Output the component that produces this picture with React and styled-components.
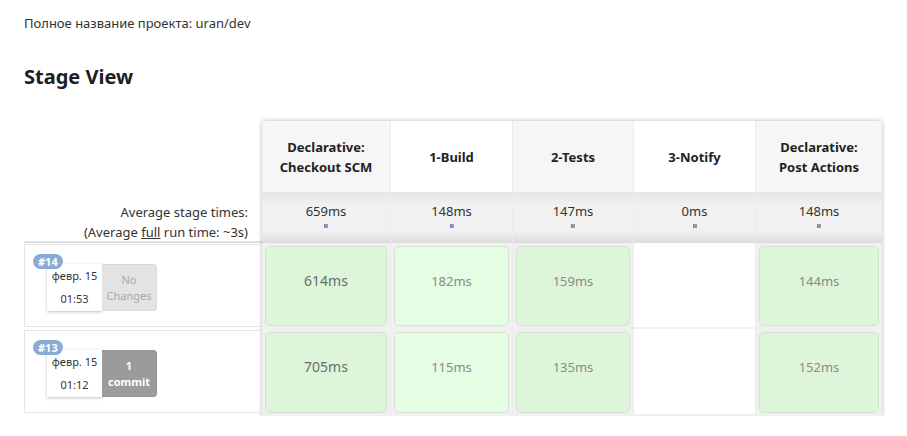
import React from "react";
import styled, { createGlobalStyle } from "styled-components";

const GlobalStyle = createGlobalStyle`
  body {
    margin: 0;
    background: #fff;
    font-family: "Noto Sans", "Open Sans", sans-serif;
    color: #333;
  }
`;

const stages = [
  { name: ["Declarative:", "Checkout SCM"], avg: "659ms", width: 128 },
  { name: ["1-Build"], avg: "148ms", width: 121 },
  { name: ["2-Tests"], avg: "147ms", width: 120 },
  { name: ["3-Notify"], avg: "0ms", width: 121 },
  { name: ["Declarative:", "Post Actions"], avg: "148ms", width: 126 },
];

const runs = [
  {
    id: "#14",
    date: "февр. 15",
    time: "01:53",
    changes: ["No", "Changes"],
    hasCommits: false,
    times: ["614ms", "182ms", "159ms", null, "144ms"],
  },
  {
    id: "#13",
    date: "февр. 15",
    time: "01:12",
    changes: ["1", "commit"],
    hasCommits: true,
    times: ["705ms", "115ms", "135ms", null, "152ms"],
  },
];

class App extends React.Component {
  render() {
    return (
      <Page>
        <GlobalStyle />
        <Description>Полное название проекта: uran/dev</Description>
        <Title>Stage View</Title>
        <StageView>
          <LeftColumn>
            <HeaderSpacer />
            <AvgLabel>
              <div>Average stage times:</div>
              <div>
                (Average <u>full</u> run time: ~3s)
              </div>
            </AvgLabel>
            {runs.map((run) => (
              <RunRow key={run.id}>
                <Badge>{run.id}</Badge>
                <RunInfo>
                  <DateBox>
                    <span>{run.date}</span>
                    <span>{run.time}</span>
                  </DateBox>
                  <ChangesBox $commits={run.hasCommits}>
                    <span>{run.changes[0]}</span>
                    <span>{run.changes[1]}</span>
                  </ChangesBox>
                </RunInfo>
              </RunRow>
            ))}
          </LeftColumn>
          <Table>
            {stages.map((stage, i) => (
              <Column key={i} style={{ width: stage.width }}>
                <HeaderCell $shaded={i % 2 === 0}>
                  {stage.name.map((line) => (
                    <div key={line}>{line}</div>
                  ))}
                </HeaderCell>
                <AvgCell>
                  <span>{stage.avg}</span>
                  <MiniBar />
                </AvgCell>
                {runs.map((run) => (
                  <RunCell key={run.id}>
                    {run.times[i] ? (
                      <StageBox $light={i === 1} $first={i === 0}>
                        {run.times[i]}
                      </StageBox>
                    ) : (
                      <EmptyBox />
                    )}
                  </RunCell>
                ))}
              </Column>
            ))}
          </Table>
        </StageView>
      </Page>
    );
  }
}

const Page = styled.div`
  padding: 14px 0 0 24px;
`;

const Description = styled.div`
  font-size: 13px;
  line-height: 18px;
  color: #333;
`;

const Title = styled.h2`
  margin: 31px 0 0 0;
  font-size: 20px;
  line-height: 28px;
  font-weight: 700;
  color: #1d1d24;
`;

const StageView = styled.div`
  display: flex;
  margin-top: 30px;
`;

const LeftColumn = styled.div`
  width: 238px;
  display: flex;
  flex-direction: column;
`;

const HeaderSpacer = styled.div`
  height: 71px;
`;

const AvgLabel = styled.div`
  height: 51px;
  box-sizing: border-box;
  padding: 10px 14px 0 0;
  text-align: right;
  font-size: 13px;
  line-height: 20px;
  color: #333;
  border-bottom: 2px solid #e2e2e2;
  u {
    text-decoration: underline;
  }
`;

const RunRow = styled.div`
  position: relative;
  height: 83px;
  margin-top: 1px;
  margin-bottom: 2px;
  box-sizing: border-box;
  border: 1px solid #e6e6e6;
  border-right: none;
  padding: 19px 0 0 22px;
`;

const Badge = styled.div`
  position: absolute;
  top: 9px;
  left: 8px;
  height: 15px;
  padding: 0 5px;
  border-radius: 8px;
  background: #8aacd4;
  color: #fff;
  font-size: 11px;
  font-weight: 700;
  line-height: 15px;
  z-index: 1;
`;

const RunInfo = styled.div`
  display: flex;
  height: 47px;
`;

const DateBox = styled.div`
  width: 55px;
  display: flex;
  flex-direction: column;
  justify-content: space-between;
  align-items: center;
  padding: 5px 0 5px;
  box-sizing: border-box;
  background: #fff;
  box-shadow: 0 1px 3px rgba(0, 0, 0, 0.25);
  font-size: 11px;
  line-height: 14px;
  color: #333;
`;

const ChangesBox = styled.div`
  width: 55px;
  display: flex;
  flex-direction: column;
  align-items: center;
  justify-content: center;
  box-sizing: border-box;
  border-radius: 0 4px 4px 0;
  background: ${(p) => (p.$commits ? "#9b9b9b" : "#e3e3e3")};
  border: 1px solid ${(p) => (p.$commits ? "#939393" : "#d8d8d8")};
  border-left: none;
  color: ${(p) => (p.$commits ? "#fff" : "#a8a8a8")};
  font-size: 11px;
  line-height: 16px;
  font-weight: ${(p) => (p.$commits ? 700 : 400)};
`;

const Table = styled.div`
  display: flex;
  background: #fff;
  box-shadow: 0 0 4px rgba(0, 0, 0, 0.3);
`;

const Column = styled.div`
  display: flex;
  flex-direction: column;
  border-left: 1px solid #ececec;
  &:first-child {
    border-left: none;
  }
`;

const HeaderCell = styled.div`
  height: 71px;
  display: flex;
  flex-direction: column;
  align-items: center;
  justify-content: center;
  background: ${(p) => (p.$shaded ? "#f6f6f6" : "#fff")};
  font-size: 13px;
  font-weight: 700;
  line-height: 20px;
  color: #222;
  text-align: center;
`;

const AvgCell = styled.div`
  height: 51px;
  box-sizing: border-box;
  padding-top: 10px;
  display: flex;
  flex-direction: column;
  align-items: center;
  background: linear-gradient(#e6e6e6, #f1f1f1 25%, #f1f1f1 75%, #dcdcdc);
  font-size: 13px;
  line-height: 18px;
  color: #333;
`;

const MiniBar = styled.div`
  width: 3px;
  height: 4px;
  margin-top: 4px;
  background: #8d9bb5;
  border-left: 1px solid #5f86c9;
`;

const RunCell = styled.div`
  height: 86px;
  box-sizing: border-box;
  padding: 3px;
  background: #f0f0f0;
  &:last-child {
    height: 87px;
  }
`;

const StageBox = styled.div`
  height: 100%;
  box-sizing: border-box;
  padding-top: 25px;
  text-align: center;
  border: 1px solid #d4e3d1;
  border-radius: 5px;
  background: ${(p) => (p.$light ? "#e5fde3" : "#ddf6da")};
  font-size: ${(p) => (p.$first ? "14px" : "13px")};
  line-height: 18px;
  color: ${(p) => (p.$first ? "#6b6b6b" : "#8a8a8a")};
`;

const EmptyBox = styled.div`
  height: calc(100% + 4px);
  margin: -3px -3px 0;
  background: #fff;
`;

export default App;
